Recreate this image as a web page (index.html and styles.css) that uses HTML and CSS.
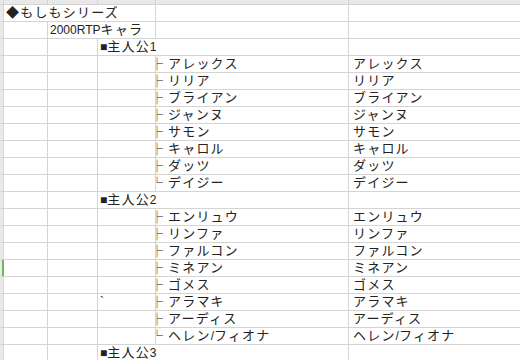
FILE: index.html
```html
<!DOCTYPE html>
<html lang="ja">
<head>
<meta charset="utf-8">
<title>もしもシリーズ</title>
<link rel="stylesheet" href="styles.css">
</head>
<body>
<div class="sheet">
  <div class="h"></div><div class="h"></div><div class="h"></div><div class="h"></div><div class="h"></div><div class="h"></div>

  <div class="rh"></div><div class="c s3">◆もしもシリーズ</div><div class="c"></div><div class="c"></div>
  <div class="rh"></div><div class="c"></div><div class="c s2"><span class="lt">2000RTP</span>キャラ</div><div class="c"></div><div class="c"></div>
  <div class="rh"></div><div class="c"></div><div class="c"></div><div class="c s2"><span class="lt">■</span>主人公<span class="lt">1</span></div><div class="c"></div>

  <div class="rh"></div><div class="c"></div><div class="c"></div><div class="c"></div><div class="c d"><span class="tr">├</span>アレックス</div><div class="c e">アレックス</div>
  <div class="rh"></div><div class="c"></div><div class="c"></div><div class="c"></div><div class="c d"><span class="tr">├</span>リリア</div><div class="c e">リリア</div>
  <div class="rh"></div><div class="c"></div><div class="c"></div><div class="c"></div><div class="c d"><span class="tr">├</span>ブライアン</div><div class="c e">ブライアン</div>
  <div class="rh"></div><div class="c"></div><div class="c"></div><div class="c"></div><div class="c d"><span class="tr">├</span>ジャンヌ</div><div class="c e">ジャンヌ</div>
  <div class="rh"></div><div class="c"></div><div class="c"></div><div class="c"></div><div class="c d"><span class="tr">├</span>サモン</div><div class="c e">サモン</div>
  <div class="rh"></div><div class="c"></div><div class="c"></div><div class="c"></div><div class="c d"><span class="tr">├</span>キャロル</div><div class="c e">キャロル</div>
  <div class="rh"></div><div class="c"></div><div class="c"></div><div class="c"></div><div class="c d"><span class="tr">├</span>ダッツ</div><div class="c e">ダッツ</div>
  <div class="rh"></div><div class="c"></div><div class="c"></div><div class="c"></div><div class="c d"><span class="tr">└</span>デイジー</div><div class="c e">デイジー</div>

  <div class="rh"></div><div class="c"></div><div class="c"></div><div class="c s2"><span class="lt">■</span>主人公<span class="lt">2</span></div><div class="c"></div>

  <div class="rh"></div><div class="c"></div><div class="c"></div><div class="c"></div><div class="c d"><span class="tr">├</span>エンリュウ</div><div class="c e">エンリュウ</div>
  <div class="rh"></div><div class="c"></div><div class="c"></div><div class="c"></div><div class="c d"><span class="tr">├</span>リンファ</div><div class="c e">リンファ</div>
  <div class="rh"></div><div class="c"></div><div class="c"></div><div class="c"></div><div class="c d"><span class="tr">├</span>ファルコン</div><div class="c e">ファルコン</div>
  <div class="rh sel"></div><div class="c"></div><div class="c"></div><div class="c"></div><div class="c d"><span class="tr">├</span>ミネアン</div><div class="c e">ミネアン</div>
  <div class="rh"></div><div class="c"></div><div class="c"></div><div class="c"></div><div class="c d"><span class="tr">├</span>ゴメス</div><div class="c e">ゴメス</div>
  <div class="rh"></div><div class="c"></div><div class="c"></div><div class="c"><span class="lt">`</span></div><div class="c d"><span class="tr">├</span>アラマキ</div><div class="c e">アラマキ</div>
  <div class="rh"></div><div class="c"></div><div class="c"></div><div class="c"></div><div class="c d"><span class="tr">├</span>アーディス</div><div class="c e">アーディス</div>
  <div class="rh"></div><div class="c"></div><div class="c"></div><div class="c"></div><div class="c d"><span class="tr">└</span>ヘレン<span class="lt">/</span>フィオナ</div><div class="c e">ヘレン<span class="lt">/</span>フィオナ</div>

  <div class="rh"></div><div class="c"></div><div class="c"></div><div class="c s2"><span class="lt">■</span>主人公<span class="lt">3</span></div><div class="c"></div>
</div>
</body>
</html>
```

FILE: styles.css
```css
html, body {
  margin: 0;
  padding: 0;
  overflow: hidden;
  background: #ffffff;
}

.sheet {
  display: grid;
  grid-template-columns: 3px 43px 49px 57px 192px 171px;
  grid-template-rows: 4px repeat(21, 16px);
  gap: 1px;
  width: 520px;
  background: #d4d4d4;
  font-family: "Liberation Sans", "Noto Sans CJK JP", sans-serif;
  font-size: 13px;
  color: #222222;
}

.h,
.rh {
  background: #e9e9e9;
}

.rh.sel {
  background: linear-gradient(90deg, #e9e9e9 2px, #74b65a 2px);
  box-shadow: 1px 0 0 #74b65a;
}

.c {
  background: #ffffff;
  white-space: nowrap;
  line-height: 16px;
  height: 16px;
  padding-left: 2px;
  letter-spacing: 1.2px;
}

.e {
  padding-left: 4px;
}

.s2 {
  grid-column: span 2;
}

.s3 {
  grid-column: span 3;
}

.lt {
  font-size: 12px;
  letter-spacing: 0;
}

.tr {
  display: inline-block;
  vertical-align: top;
  height: 16px;
  line-height: 16px;
  font-family: "Noto Sans CJK JP", sans-serif;
  font-size: 12px;
  letter-spacing: 0;
  margin-left: -7px;
  margin-right: 5px;
  color: #111111;
}
```
